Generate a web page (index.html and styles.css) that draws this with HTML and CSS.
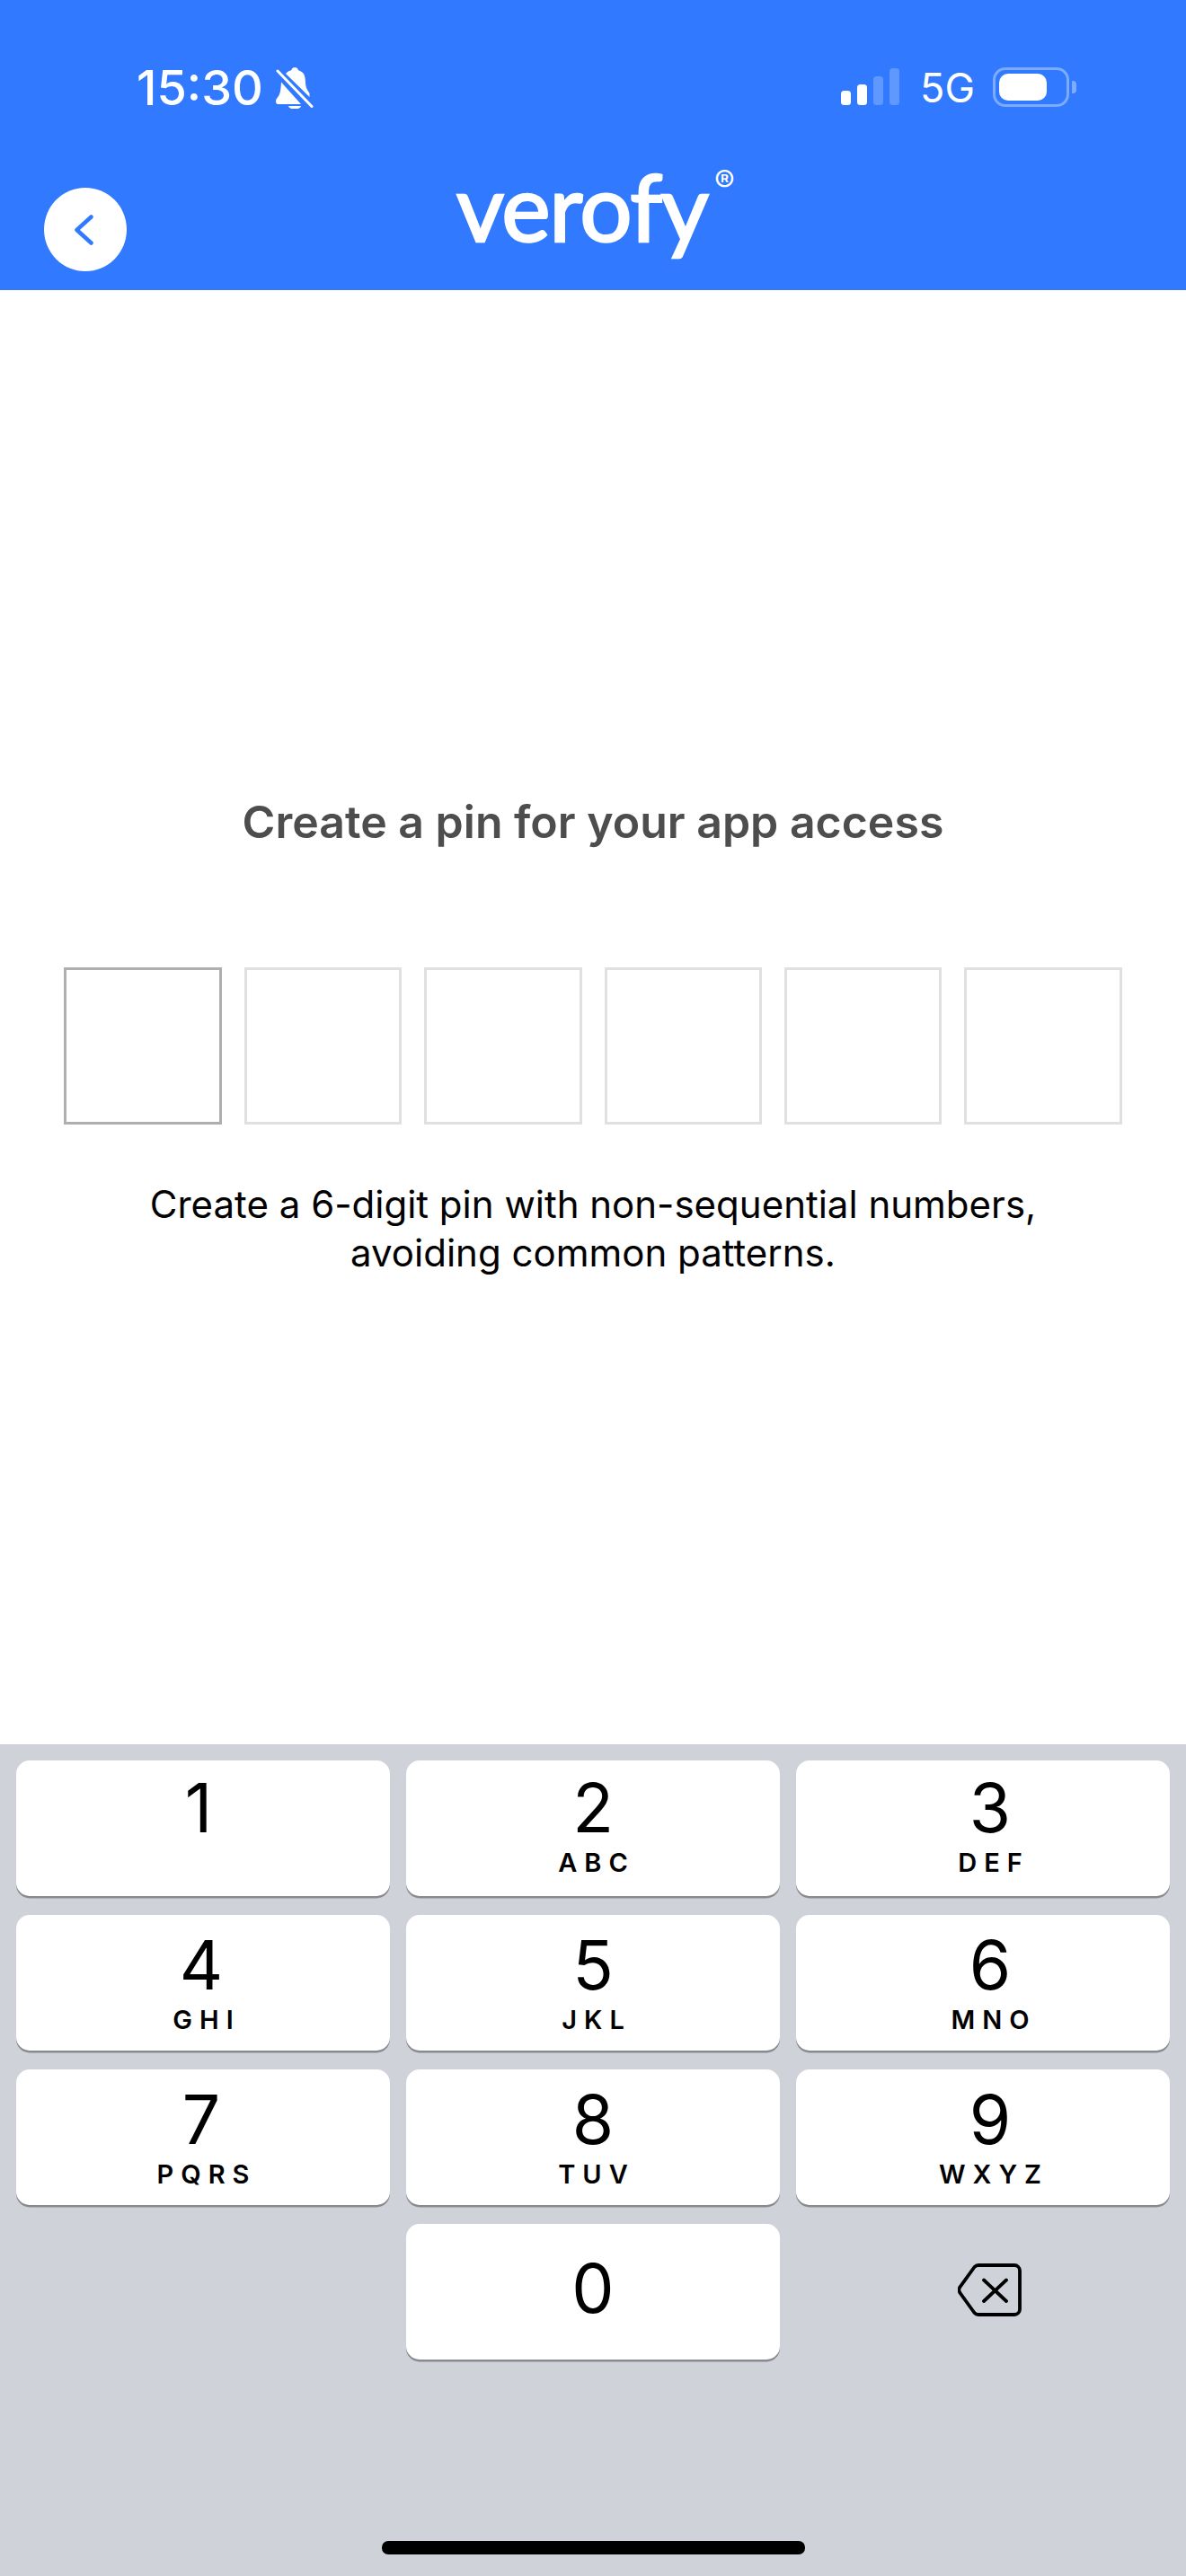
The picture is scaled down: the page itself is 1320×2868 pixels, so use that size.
FILE: index.html
```html
<!DOCTYPE html>
<html lang="en">
<head>
<meta charset="utf-8">
<title>Verofy</title>
<link rel="stylesheet" href="styles.css">
</head>
<body>
<div class="screen">
  <header class="header">
    <div class="status">
      <div class="status-left">
        <span class="time">15:30</span>
        <svg class="bell" viewBox="0 0 42 46" aria-hidden="true">
          <path fill="#fff" d="M11 7C12.500 5 15 3.600 17.200 3.200 18 .6 20 0 21 0c2 0 3.500 1 4 3.300C31 5 32.500 9 32.800 14c.3 5 .5 8 2.200 11L37.500 29 37.500 33 11 7Z"/>
          <path fill="#fff" d="M6 16.500 28 41H2.500C.5 41 0 39.300 0 37.500c0-1.500 1-3 2.500-4.800C5 29.500 5.600 24 6 16.500Z"/>
          <path fill="#fff" d="M14 43h14c-.5 2-3 3.500-7 3.500S14.500 45 14 43Z"/>
          <path stroke="#fff" stroke-width="3" stroke-linecap="round" fill="none" d="M2 4 40 43.500"/>
        </svg>
      </div>
      <div class="status-right">
        <div class="signal">
          <i class="bar bar-1"></i><i class="bar bar-2"></i><i class="bar bar-3 dim"></i><i class="bar bar-4 dim"></i>
        </div>
        <span class="network">5G</span>
        <div class="battery"><div class="battery-body"><div class="battery-fill"></div></div><div class="battery-nub"></div></div>
      </div>
    </div>
    <div class="nav">
      <button class="back" aria-label="Back">
        <svg viewBox="0 0 21 34" class="chevron" aria-hidden="true"><path d="M18.500 2.500 2.500 17l16 14.500" fill="none" stroke="#317aff" stroke-width="4.500" stroke-linecap="round" stroke-linejoin="round"/></svg>
      </button>
      <div class="logo">verofy<sup class="reg">®</sup></div>
    </div>
  </header>

  <main class="content">
    <h1 class="title">Create a pin for your app access</h1>
    <div class="pins">
      <div class="pin active"></div>
      <div class="pin"></div>
      <div class="pin"></div>
      <div class="pin"></div>
      <div class="pin"></div>
      <div class="pin"></div>
    </div>
    <p class="hint">Create a 6-digit pin with non-sequential numbers,<br>avoiding common patterns.</p>
  </main>

  <section class="keyboard">
    <div class="keys">
      <button class="key first col-1"><span class="digit one">1</span></button>
      <button class="key first"><span class="digit">2</span><span class="letters">ABC</span></button>
      <button class="key first col-3"><span class="digit">3</span><span class="letters">DEF</span></button>
      <button class="key col-1"><span class="digit">4</span><span class="letters">GHI</span></button>
      <button class="key"><span class="digit">5</span><span class="letters">JKL</span></button>
      <button class="key col-3"><span class="digit">6</span><span class="letters">MNO</span></button>
      <button class="key col-1"><span class="digit">7</span><span class="letters">PQRS</span></button>
      <button class="key"><span class="digit">8</span><span class="letters">TUV</span></button>
      <button class="key col-3"><span class="digit">9</span><span class="letters">WXYZ</span></button>
      <div class="key-blank"></div>
      <button class="key zero"><span class="digit">0</span></button>
      <div class="key-blank erase">
        <svg class="backspace" viewBox="0 0 71 59" aria-hidden="true">
          <path d="M23 2h40a6 6 0 0 1 6 6v43a6 6 0 0 1-6 6H23a6 6 0 0 1-4.500-2L3 33.500a6 6 0 0 1 0-8L18.500 4a6 6 0 0 1 4.500-2Z" fill="none" stroke="#000" stroke-width="3.800" stroke-linejoin="round"/>
          <path d="M29 18.500 54 42M54 18.500 29 42" fill="none" stroke="#000" stroke-width="3.800" stroke-linecap="round"/>
        </svg>
      </div>
    </div>
    <div class="home-row"><div class="home-bar"></div></div>
  </section>
</div>
</body>
</html>
```

FILE: styles.css
```css
* { box-sizing: border-box; }
html, body { margin: 0; padding: 0; }
body { width: 1320px; height: 2868px; overflow: hidden; background: #fff; font-family: Inter, "Liberation Sans", sans-serif; }
.screen { width: 1320px; height: 2868px; display: flex; flex-direction: column; }

.header { height: 323px; background: #317aff; color: #fff; flex: none; }
.status { display: flex; justify-content: space-between; align-items: flex-start; height: 209px; padding: 75px 122px 0 152px; }
.status-left { display: flex; align-items: flex-start; }
.time { font-size: 54px; line-height: 46px; font-weight: 500; }
.bell { width: 42px; height: 46px; margin-left: 14px; }
.status-right { display: flex; align-items: flex-start; }
.signal { display: flex; align-items: flex-end; gap: 7px; height: 42px; }
.bar { display: block; width: 11px; background: #fff; border-radius: 3.500px; }
.bar.dim { background: #5f98ff; }
.bar-1 { height: 16px; }
.bar-2 { height: 23px; }
.bar-3 { height: 32px; }
.bar-4 { height: 41px; }
.network { font-size: 45px; line-height: 46px; margin-left: 23px; font-weight: 400; }
.battery { display: flex; align-items: center; margin-left: 20px; height: 44px; }
.battery-body { width: 85px; height: 44px; border: 3px solid #7dabff; border-radius: 14px; padding: 4px; }
.battery-fill { width: 53px; height: 30px; background: #fff; border-radius: 10px; }
.battery-nub { width: 5px; height: 14px; margin-left: 3px; background: #7dabff; border-radius: 0 4px 4px 0; }

.nav { position: relative; height: 114px; }
.back { position: absolute; left: 49px; top: 0; width: 92px; height: 93px; border: 0; padding: 0; border-radius: 50%; background: #fff; display: flex; align-items: center; justify-content: center; }
.chevron { width: 21px; height: 34px; margin-left: -3px; }
.logo { position: absolute; left: 508px; top: -42px; font-family: Lato, sans-serif; font-size: 103px; line-height: 124px; font-weight: 400; letter-spacing: -1.400px; color: #fff; white-space: nowrap; -webkit-text-stroke: 2.500px #fff; }
.reg { position: absolute; top: 18px; left: 287px; font-size: 34px; line-height: 34px; letter-spacing: 0; font-family: Inter, sans-serif; -webkit-text-stroke: 0; }

.content { flex: 1; display: flex; flex-direction: column; align-items: center; padding-top: 561px; }
.title { margin: 0; font-size: 50px; line-height: 62px; font-weight: 600; color: #4d4d4d; }
.pins { display: flex; gap: 25px; margin-top: 131px; }
.pin { width: 175.400px; height: 175px; border: 3px solid #e0e0e0; background: #fff; }
.pin.active { border-color: #afafaf; }
.hint { margin: 62px 0 0; text-align: center; font-size: 42px; line-height: 54px; color: #000; font-weight: 400; }

.keyboard { flex: none; height: 926px; background: #cfd2d9; display: flex; flex-direction: column; }
.keys { display: grid; grid-template-columns: repeat(3, 416px); grid-auto-rows: 151px; column-gap: 18px; row-gap: 21px; padding: 18px 18px 0; }
.key { border: 0; margin: 0; padding: 28px 0 0; background: #fff; border-radius: 15px; box-shadow: 0 2.500px 0 #898a8e; color: #000; font-family: Inter, sans-serif; display: flex; flex-direction: column; align-items: center; justify-content: flex-start; }
.key.first { padding-top: 25px; }
.key.zero { padding-top: 44px; }
.key.col-3 { padding-left: 16px; }
.col-1 .digit { margin-right: 4px; }
.col-1 .digit.one { margin-right: 10px; }
.digit { font-size: 75px; line-height: 55px; font-weight: 400; }
.letters { margin-top: 23px; font-size: 29px; line-height: 22px; font-weight: 600; letter-spacing: 8px; margin-right: -8px; }
.key-blank { display: flex; align-items: center; justify-content: center; }
.erase { padding: 0 0 4px 15px; }
.backspace { width: 71px; height: 59px; }
.home-row { flex: 1; display: flex; justify-content: center; align-items: flex-end; padding-bottom: 24px; }
.home-bar { width: 471px; height: 15px; border-radius: 7px; background: #000; }
```
